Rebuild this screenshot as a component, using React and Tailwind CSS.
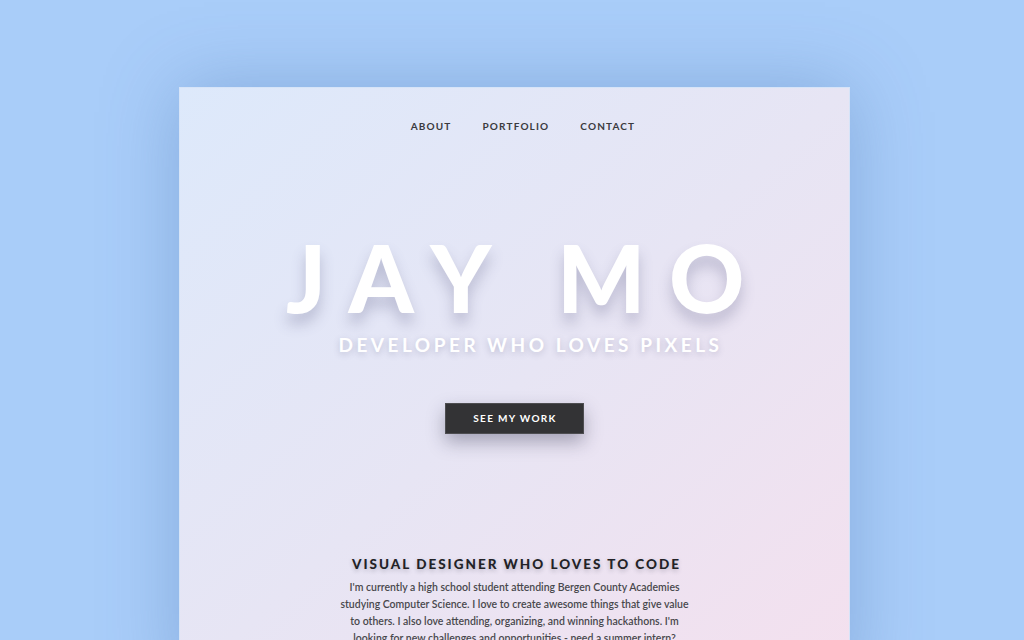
import React from "react";

const font = { fontFamily: "Lato, 'Liberation Sans', sans-serif" };

const App = () => {
  return (
    <div
      className="h-[640px] w-[1024px] overflow-hidden bg-[#a9cdf9] pl-[5px] pt-[87px]"
      style={font}
    >
      <div className="mx-auto h-[600px] w-[671px] border border-[#d6e4f8] bg-gradient-to-br from-[#dde9fb] via-[#e7e5f4] to-[#f4e0ee] shadow-[0_0_70px_rgba(70,110,170,0.35)]">
        <nav className="flex justify-center gap-[31px] pl-[17px] pt-[31px] text-[10px] font-bold tracking-[1.15px] text-[#3a3a3e]">
          <a>ABOUT</a>
          <a>PORTFOLIO</a>
          <a>CONTACT</a>
        </nav>

        <div className="flex flex-col items-center pt-[97px]">
          <h1 className="pl-[25px] text-[93px] font-black leading-none tracking-[23.6px] text-white [text-shadow:0_10px_14px_rgba(90,90,130,0.3)]">
            JAY MO
          </h1>
          <p className="mt-[7px] pl-[32px] text-[19px] font-bold tracking-[3.5px] text-white [text-shadow:0_2px_6px_rgba(90,90,130,0.3)]">
            DEVELOPER WHO LOVES PIXELS
          </p>
          <button className="mt-[43px] h-[31px] w-[139px] border border-[#4d4d50] bg-[#333335] pl-[1px] text-[10px] font-bold tracking-[1.3px] text-white shadow-[0_8px_18px_rgba(40,40,70,0.35)]">
            SEE MY WORK
          </button>

          <h2 className="mt-[120px] pl-[4px] text-[13.5px] font-black tracking-[2px] text-[#222226] [text-shadow:0_2px_4px_rgba(60,60,80,0.3)]">
            VISUAL DESIGNER WHO LOVES TO CODE
          </h2>
          <p className="mt-[5px] w-[358px] text-center text-[10.5px] font-semibold leading-[17px] text-[#48484c]">
            I'm currently a high school student attending Bergen County Academies
            studying Computer Science. I love to create awesome things that give
            value to others. I also love attending, organizing, and winning
            hackathons. I'm looking for new challenges and opportunities - need a
            summer intern?
          </p>
        </div>
      </div>
    </div>
  );
};

export default App;
